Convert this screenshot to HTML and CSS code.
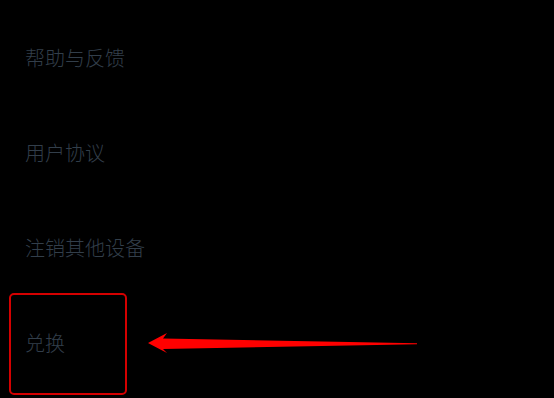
FILE: index.html
```html
<!DOCTYPE html>
<html lang="zh-CN">
<head>
    <meta charset="UTF-8">
    <meta name="viewport" content="width=device-width, initial-scale=1.0">
    <title>设置</title>
    <link rel="stylesheet" href="styles.css">
</head>
<body>
    <div class="settings">
        <ul class="menu">
            <li class="menu-item">帮助与反馈</li>
            <li class="menu-item">用户协议</li>
            <li class="menu-item">注销其他设备</li>
            <li class="menu-item highlighted">兑换</li>
        </ul>

        <!-- annotation drawn over the screenshot -->
        <svg class="arrow" width="554" height="398" viewBox="0 0 554 398">
            <polygon points="148,343 167,333 163,338.5 417,343.3 417,344.3 163,349 167,353" fill="#f00" />
        </svg>
    </div>
</body>
</html>
```

FILE: styles.css
```css
* {
    box-sizing: border-box;
}
body {
    margin: 0;
    background-color: #000000;
    font-family: "Noto Sans CJK SC", "Noto Sans", sans-serif;
}
.settings {
    position: relative;
    width: 554px;
    height: 398px;
    overflow: hidden;
}
.menu {
    list-style: none;
    margin: 0;
    padding: 10px 0 0 0;
}
.menu-item {
    height: 95px;
    display: flex;
    align-items: center;
    padding-left: 25px;
    font-size: 20px;
    font-weight: 300;
    color: #323e4a;
}
.highlighted {
    position: relative;
}
/* red box around the item */
.highlighted:after {
    content: "";
    position: absolute;
    left: 9px;
    top: -2px;
    width: 114px;
    height: 98px;
    border: 2px solid #d40000;
    border-radius: 5px;
}
.arrow {
    position: absolute;
    left: 0;
    top: 0;
}
```
